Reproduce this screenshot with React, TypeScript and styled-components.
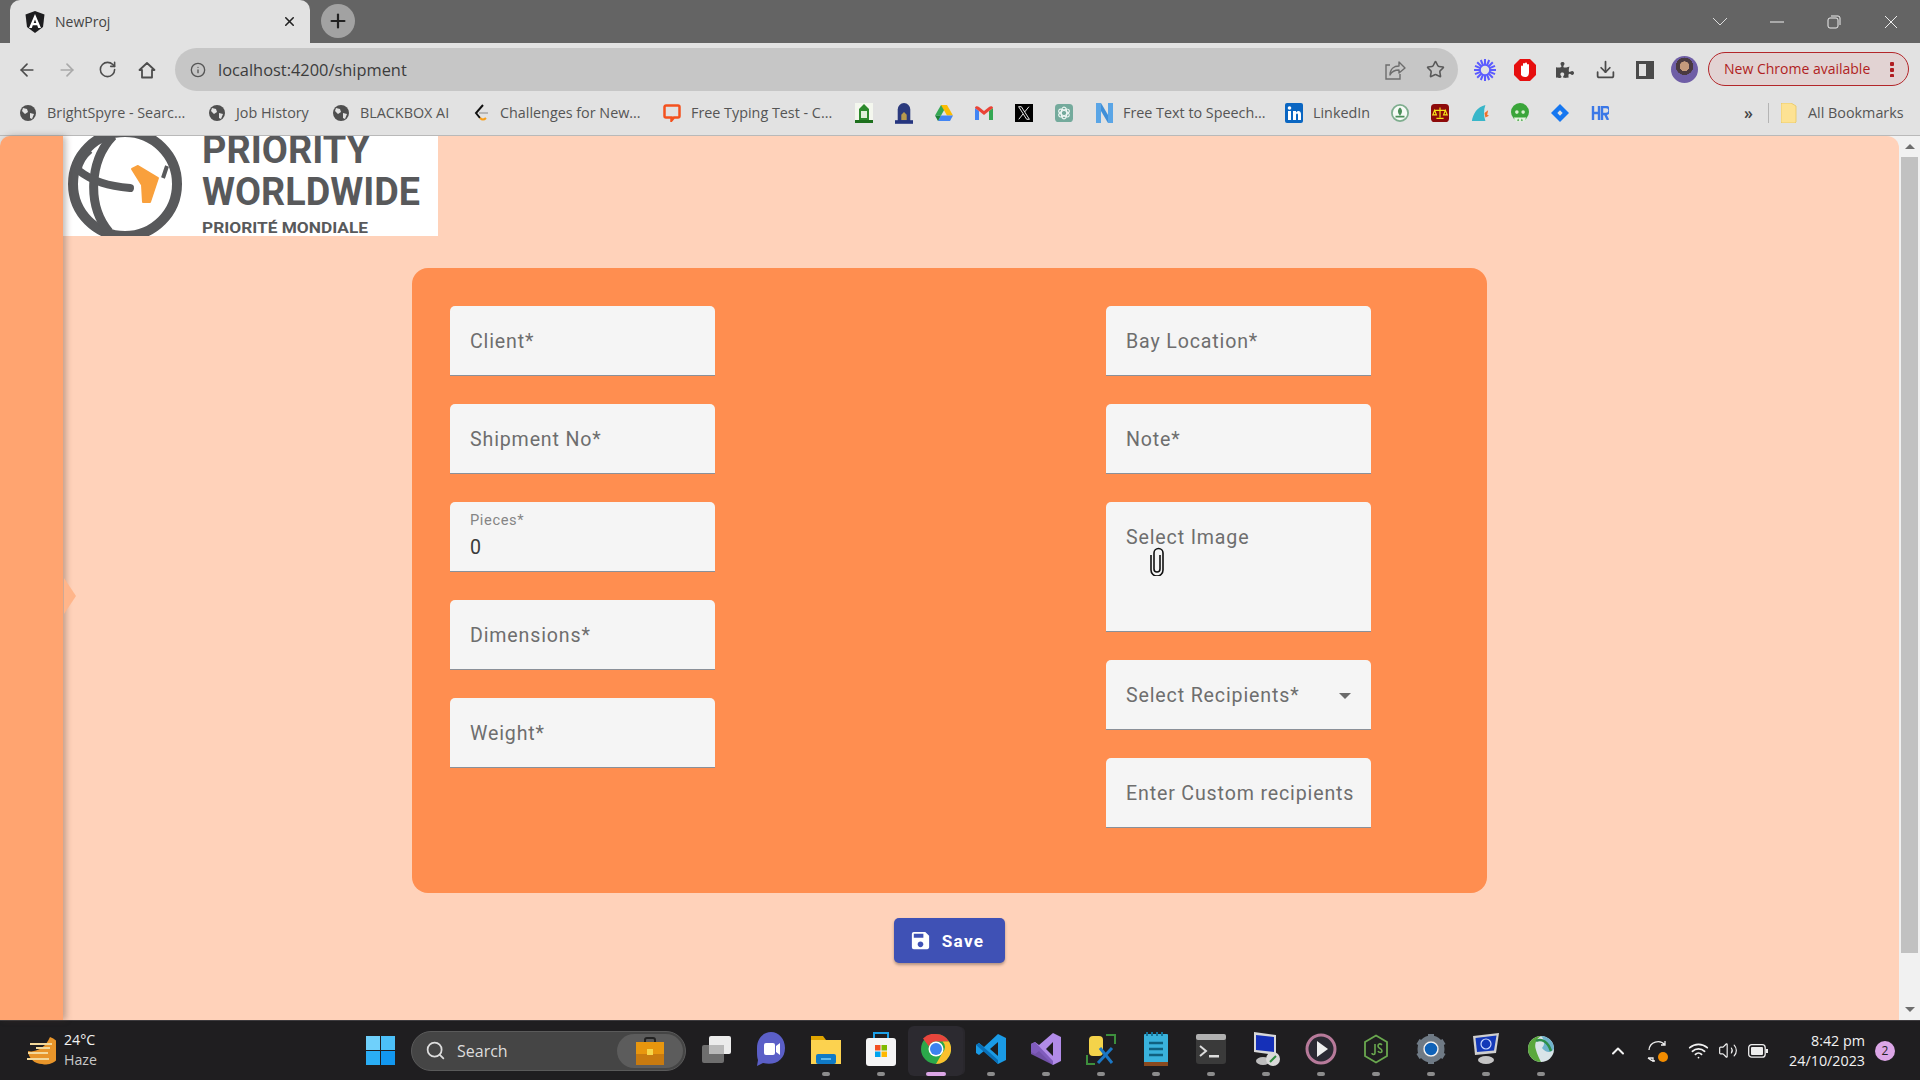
import React from "react";
import styled, { createGlobalStyle } from "styled-components";
import { ArrowLeft, ArrowRight, RotateCw, Info, Star, Download, Search, ChevronUp, Wifi, Volume2, X, Plus } from "lucide-react";
import { FaPuzzlePiece } from "react-icons/fa";
import { MdSave } from "react-icons/md";

const GlobalStyle = createGlobalStyle`
  html, body {
    margin: 0;
    padding: 0;
    height: 100%;
    overflow: hidden;
  }
  * {
    box-sizing: border-box;
  }
`;

const Screen = styled.div`
  width: 1920px;
  height: 1080px;
  display: flex;
  flex-direction: column;
  font-family: "Open Sans", "Liberation Sans", sans-serif;
`;

// Browser chrome
const TitleBar = styled.div`
  height: 43px;
  background: #646464;
  display: flex;
  align-items: flex-end;
  padding-left: 10px;
`;

const Tab = styled.div`
  width: 300px;
  height: 43px;
  background: #e2e2e2;
  border-radius: 10px 10px 0 0;
  display: flex;
  align-items: center;
  padding: 0 13px 0 15px;
  gap: 10px;
`;

const TabTitle = styled.span`
  flex: 1;
  font-size: 14px;
  color: #444;
`;

const NewTab = styled.div`
  width: 34px;
  height: 34px;
  margin: 0 0 5px 11px;
  border-radius: 50%;
  background: #a2a2a2;
  display: flex;
  align-items: center;
  justify-content: center;
  color: #222;
`;

const WindowControls = styled.div`
  margin-left: auto;
  height: 43px;
  display: flex;
  align-items: center;
  color: #f0f0f0;
  padding-right: 1px;
`;

const WindowButton = styled.div`
  width: 57px;
  display: flex;
  justify-content: center;
`;

const Toolbar = styled.div`
  height: 48px;
  background: #e2e2e2;
  display: flex;
  align-items: flex-end;
  padding: 0 0 0 7px;
`;

const NavButton = styled.div<{ $faded?: boolean }>`
  width: 40px;
  height: 43px;
  flex: none;
  display: flex;
  align-items: center;
  justify-content: center;
  color: ${(p) => (p.$faded ? "#a9a9a9" : "#4d4d4d")};
`;

const AddressBar = styled.div`
  width: 1283px;
  height: 43px;
  flex: none;
  margin-left: 8px;
  background: #c6c6c6;
  border-radius: 22px;
  display: flex;
  align-items: center;
  padding: 0 2px 0 15px;
  color: #555;
`;

const Url = styled.span`
  flex: 1;
  margin-left: 12px;
  font-size: 16.4px;
  color: #3c3c3c;
`;

const AddressAction = styled.div`
  width: 41px;
  display: flex;
  justify-content: center;
`;

const ExtensionRow = styled.div`
  height: 43px;
  flex: none;
  margin-left: 7px;
  display: flex;
  align-items: center;
`;

const Extension = styled.div`
  width: 40px;
  display: flex;
  justify-content: center;
  color: #4a4a4a;
`;

const Avatar = styled.div`
  width: 27px;
  height: 27px;
  margin-left: -1px;
  border-radius: 50%;
  background: radial-gradient(circle at 50% 38%, #c49a7c 0 22%, #4a3a40 23% 40%, #6f5ea6 41% 100%);
`;

const UpdatePill = styled.div`
  width: 201px;
  height: 34px;
  flex: none;
  margin: 0 0 5px 10px;
  border: 1px solid #b3262a;
  border-radius: 17px;
  background: #e2d3d3;
  color: #b01e22;
  display: flex;
  align-items: center;
  justify-content: space-between;
  padding: 0 14px 2px 15px;
  font-size: 14px;
  white-space: nowrap;
`;

const PillDots = styled.span`
  width: 4px;
  height: 16px;
  margin-top: 2px;
  background: radial-gradient(circle, #b01e22 2px, transparent 2.5px) 0 0 / 4px 6px repeat-y;
`;

const BookmarkBar = styled.div`
  height: 45px;
  background: #e2e2e2;
  border-bottom: 1px solid #b9b9b9;
  display: flex;
  align-items: center;
  gap: 22px;
  padding: 0 14px 0 19px;
`;

const Bookmark = styled.div`
  display: flex;
  align-items: center;
  gap: 10px;
  font-size: 14.35px;
  color: #555;
  white-space: nowrap;
`;

const BookmarkText = styled.span<{ $w: number }>`
  width: ${(p) => p.$w}px;
  padding-bottom: 2px;
`;

const BookmarkIcon = styled.div`
  width: 18px;
  height: 18px;
  flex: none;
  display: flex;
  align-items: center;
  justify-content: center;
`;

const BookmarkEnd = styled.div`
  margin-left: auto;
  display: flex;
  align-items: center;
  font-size: 14px;
  color: #555;
`;

const More = styled.span`
  font-size: 16px;
  color: #444;
  font-weight: 600;
`;

const Divider = styled.span`
  width: 1px;
  height: 20px;
  background: #b4b4b4;
  margin: 0 11px 0 15px;
`;

// Page
const PageArea = styled.div`
  flex: 1;
  min-height: 0;
  display: flex;
  background: #e2e2e2;
`;

const Sidebar = styled.aside`
  position: relative;
  width: 63px;
  background: #ffa470;
  border-top-left-radius: 10px;
  box-shadow: 3px 0 6px rgba(80, 60, 50, 0.35);
  z-index: 1;
`;

const SidebarToggle = styled.div`
  position: absolute;
  left: 64px;
  top: 442px;
  border-left: 12px solid #ffb58a;
  border-top: 18px solid transparent;
  border-bottom: 18px solid transparent;
`;

const PageBody = styled.div`
  flex: 1;
  min-width: 0;
  display: flex;
  background: #f1f1f1;
`;

const Main = styled.main`
  flex: 1;
  background: #ffd2ba;
  border-top-right-radius: 12px;
  overflow: hidden;
`;

const LogoBox = styled.div`
  width: 375px;
  height: 100px;
  background: #fff;
  overflow: hidden;
`;

const Content = styled.div`
  width: 1075px;
  margin: 32px 0 0 349px;
  display: flex;
  flex-direction: column;
  align-items: center;
`;

const FormCard = styled.form`
  width: 100%;
  background: #ff8e50;
  border-radius: 16px;
  display: grid;
  grid-template-columns: 265px 265px;
  column-gap: 391px;
  padding: 38px 0 65px 38px;
`;

const FieldColumn = styled.div`
  display: flex;
  flex-direction: column;
  gap: 28px;
`;

const Field = styled.div<{ $tall?: boolean }>`
  position: relative;
  height: ${(p) => (p.$tall ? 130 : 70)}px;
  background: #f5f5f5;
  border-radius: 5px 5px 0 0;
  border-bottom: 1px solid #8a9099;
  padding: ${(p) => (p.$tall ? "22px" : "0")} 20px 0;
  display: flex;
  flex-direction: column;
  justify-content: ${(p) => (p.$tall ? "flex-start" : "center")};
  font-family: Roboto, sans-serif;
`;

const FieldLabel = styled.div`
  font-size: 19.6px;
  line-height: 24px;
  padding-top: 2px;
  letter-spacing: 0.85px;
  color: #6e6e6e;
  white-space: nowrap;
`;

const FloatingLabel = styled.div`
  font-size: 14.7px;
  line-height: 18px;
  margin-top: -2px;
  letter-spacing: 0.6px;
  color: #858585;
`;

const FieldValue = styled.div`
  font-size: 19.6px;
  line-height: 24px;
  margin-top: 7px;
  color: #3a3a3a;
`;

const ClipIcon = styled.svg`
  width: 16px;
  height: 29px;
  margin: -3px 0 0 23px;
`;

const DropArrow = styled.span`
  position: absolute;
  right: 20px;
  top: 33px;
  border-top: 6px solid #6b6b6b;
  border-left: 6px solid transparent;
  border-right: 6px solid transparent;
`;

const SaveButton = styled.button`
  width: 111px;
  height: 45px;
  margin-top: 25px;
  border: none;
  border-radius: 5px;
  background: #3f51b5;
  color: #fff;
  display: flex;
  align-items: center;
  justify-content: center;
  gap: 10px;
  padding: 0 6px 0 0;
  font-family: Roboto, sans-serif;
  font-size: 17.2px;
  font-weight: 700;
  letter-spacing: 1.2px;
  box-shadow: 0 2px 3px rgba(0, 0, 0, 0.3);
`;

const ScrollTrack = styled.div`
  width: 21px;
  display: flex;
  flex-direction: column;
  align-items: center;
  justify-content: space-between;
`;

const ScrollArrow = styled.div<{ $down?: boolean }>`
  height: 21px;
  display: flex;
  align-items: center;
  &::before {
    content: "";
    border-left: 5px solid transparent;
    border-right: 5px solid transparent;
    ${(p) => (p.$down ? "border-top" : "border-bottom")}: 5px solid #6e6e6e;
  }
`;

const ScrollThumb = styled.div`
  width: 17px;
  flex: 1;
  margin: 0 0 46px;
  background: #c1c1c1;
`;

// Taskbar
const Taskbar = styled.div`
  height: 60px;
  background: #1f1e20;
  border-top: 1px solid #3d3b3e;
  display: flex;
  align-items: center;
  color: #f2f2f2;
  font-family: "Open Sans", sans-serif;
`;

const Weather = styled.div`
  width: 349px;
  padding-left: 24px;
  display: flex;
  align-items: center;
  gap: 8px;
`;

const WeatherText = styled.div`
  font-size: 14.2px;
  line-height: 20px;
  padding-bottom: 2px;
`;

const WeatherSub = styled.div`
  color: #c8c8c8;
`;

const StartButton = styled.div`
  width: 62px;
  display: flex;
  justify-content: center;
`;

const SearchBox = styled.div`
  width: 275px;
  height: 40px;
  border-radius: 20px;
  background: #454545;
  border: 1px solid #5a5a5a;
  display: flex;
  align-items: center;
  padding: 0 2px 0 13px;
  color: #ddd;
  font-size: 16px;
  gap: 11px;
`;

const SearchLabel = styled.span`
  flex: 1;
`;

const SearchBadge = styled.div`
  width: 66px;
  height: 34px;
  border-radius: 17px;
  background: #5c5c5c;
  display: flex;
  align-items: center;
  justify-content: center;
`;

const AppIcons = styled.div`
  display: flex;
  margin-left: 2px;
`;

const AppSlot = styled.div<{ $active?: boolean }>`
  position: relative;
  width: 55px;
  height: 50px;
  display: flex;
  align-items: center;
  justify-content: center;
  padding-bottom: 3px;
  ${(p) =>
    p.$active
      ? "background: #2c2a30; border-radius: 6px; box-shadow: 3px 0 0 -1px #29272c;"
      : ""}
`;

const RunDot = styled.span<{ $active?: boolean }>`
  position: absolute;
  bottom: 0;
  left: 50%;
  transform: translateX(-50%);
  width: ${(p) => (p.$active ? 20 : 8)}px;
  height: 4px;
  border-radius: 2px;
  background: ${(p) => (p.$active ? "#dba6e6" : "#8c8c8c")};
`;

const Tray = styled.div`
  margin-left: auto;
  display: flex;
  align-items: center;
  padding-right: 25px;
`;

const TrayIcon = styled.div<{ $w: number }>`
  width: ${(p) => p.$w}px;
  display: flex;
  justify-content: center;
`;

const Clock = styled.div`
  width: 87px;
  text-align: right;
  font-size: 14.3px;
  line-height: 20px;
  margin: 0 10px 0 0;
`;

const Badge = styled.div`
  width: 20px;
  height: 20px;
  border-radius: 50%;
  background: #dba6e6;
  color: #222;
  font-size: 12px;
  display: flex;
  align-items: center;
  justify-content: center;
`;

const GlobeIcon = () => (
  <svg width="16" height="16" viewBox="0 0 16 16">
    <circle cx="8" cy="8" r="8" fill="#4f4f4f" />
    <path d="M3 3l4 1 1 3-3 2-3-3zM10 8l4 1-2 5-2-1z" fill="#e2e2e2" />
  </svg>
);

const Favicons: Record<string, React.ReactNode> = {
  leet: (
    <svg width="16" height="18" viewBox="0 0 16 18" fill="none" strokeWidth="2">
      <path d="M10 1 3 9l4 5" stroke="#111" />
      <path d="M6 9h9" stroke="#b5b5b5" />
      <path d="M7 14c2 2 4 2 6 0" stroke="#f89f1b" />
    </svg>
  ),
  chat: (
    <svg width="18" height="18" viewBox="0 0 18 18" fill="none">
      <path d="M3 1.5h12a1.5 1.5 0 0 1 1.5 1.5v9a1.5 1.5 0 0 1-1.5 1.5h-4L8.5 16.5V13.500H3A1.500 1.500 0 0 1 1.500 12V3A1.500 1.500 0 0 1 3 1.500z" stroke="#f4511e" strokeWidth="2.5" />
    </svg>
  ),
  green: (
    <svg width="18" height="20" viewBox="0 0 18 20">
      <rect x="0" width="18" height="20" fill="#f4f7ee" />
      <path d="M4 18V6l5-5 5 5v12z" fill="#2c8a2c" />
      <rect x="6" y="8" width="6" height="7" fill="#dff0d8" />
      <rect y="17" width="18" height="3" fill="#1d6f1d" />
    </svg>
  ),
  blue: (
    <svg width="20" height="24" viewBox="0 0 20 24">
      <path d="M3 22V8a7 7 0 0 1 14 0v14z" fill="#2b3a7d" />
      <path d="M7 20v-6l3-3 3 3v6z" fill="#b99a4d" />
      <rect y="20" width="20" height="4" fill="#25357f" />
    </svg>
  ),
  drive: (
    <svg width="18" height="16" viewBox="0 0 18 16">
      <path d="M6 0h6L6 10.500H0z" fill="#34a853" />
      <path d="M6 0h6l6 10.500h-6z" fill="#fbbc04" />
      <path d="M3 16 6 10.500h12L15 16z" fill="#4285f4" />
      <path d="M0 10.500 3 16l3-5.500z" fill="#188038" />
    </svg>
  ),
  gmail: (
    <svg width="18" height="14" viewBox="0 0 18 14">
      <path d="M0 2v12h4V5z" fill="#4285f4" />
      <path d="M14 5v9h4V2z" fill="#34a853" />
      <path d="M0 2c0-2 2.500-2.500 4-1l5 4 5-4c1.500-1.500 4-1 4 1l-4 3-5 4-5-4z" fill="#ea4335" />
    </svg>
  ),
  x: (
    <svg width="20" height="20" viewBox="0 0 20 20">
      <rect width="20" height="20" fill="#000" />
      <path d="M4 3h3l9 14h-3z" fill="none" stroke="#fff" strokeWidth="1" />
      <path d="M15.500 3 10.800 8.800M9 11l-4.800 6" stroke="#fff" strokeWidth="1" />
    </svg>
  ),
  gpt: (
    <svg width="20" height="20" viewBox="0 0 20 20">
      <rect width="20" height="20" rx="4" fill="#74aa9c" />
      <g fill="none" stroke="#eef6f3" strokeWidth="1.300">
        <ellipse cx="10" cy="10" rx="3" ry="6.500" />
        <ellipse cx="10" cy="10" rx="3" ry="6.500" transform="rotate(60 10 10)" />
        <ellipse cx="10" cy="10" rx="3" ry="6.500" transform="rotate(120 10 10)" />
      </g>
    </svg>
  ),
  notevibes: (
    <svg width="17" height="20" viewBox="0 0 17 20">
      <path d="M0 0h5v20H0zM12 0h5v20h-5z" fill="#5aa5e6" />
      <path d="M5 0l7 12v8L5 8z" fill="#3f8fd8" />
    </svg>
  ),
  linkedin: (
    <svg width="18" height="20" viewBox="0 0 18 20">
      <rect width="18" height="20" rx="2" fill="#0a66c2" />
      <rect x="3" y="8" width="3" height="9" fill="#fff" />
      <circle cx="4.500" cy="5" r="1.800" fill="#fff" />
      <path d="M8 8h3v1.500c1.500-2.500 5-2 5 1.500v6h-3v-5c0-2-2-2-2 0v5H8z" fill="#fff" />
    </svg>
  ),
  emblem: (
    <svg width="20" height="20" viewBox="0 0 20 20">
      <circle cx="10" cy="10" r="9" fill="#f6faf6" stroke="#7fae8f" strokeWidth="2" />
      <path d="M10 4c3 2 3 6 0 9-3-3-3-7 0-9zM5 13h10v2H5z" fill="#4c8f5a" />
    </svg>
  ),
  law: (
    <svg width="20" height="20" viewBox="0 0 20 20">
      <rect width="20" height="20" rx="4" fill="#8d0a0a" />
      <path d="M10 4v11M6 16h8M4 7h12M4 7l-2 5h4zM16 7l-2 5h4z" stroke="#f6e419" strokeWidth="1.300" fill="none" />
    </svg>
  ),
  fin: (
    <svg width="20" height="18" viewBox="0 0 20 18">
      <path d="M1 18C2 10 7 2 16 0c-2 5-2 12 0 18z" fill="#38b6c9" />
      <path d="M15 9l4-3-1 5 2 1-4 2z" fill="#f0702a" />
    </svg>
  ),
  ghost: (
    <svg width="20" height="22" viewBox="0 0 20 22">
      <circle cx="10" cy="10" r="10" fill="#3aa53a" />
      <path d="M3 16l3 5 2-4 2 5 2-5 2 4 3-5z" fill="#e4f3e0" />
      <circle cx="6.500" cy="10" r="2" fill="#d8f0d0" />
      <circle cx="13.500" cy="10" r="2" fill="#d8f0d0" />
    </svg>
  ),
  jira: (
    <svg width="20" height="20" viewBox="0 0 20 20">
      <path d="M10 0l10 10-10 10L0 10z" fill="#1677f0" />
      <path d="M10 7l3 3-3 3-3-3z" fill="#e2e2e2" />
    </svg>
  ),
};

const LogoMark = () => (
  <svg width="375" height="100" viewBox="0 0 375 100">
    <g fill="none" stroke="#58595b">
      <circle cx="62" cy="48" r="52" strokeWidth="10" />
      <path d="M50 0C26 25 24 70 46 96" strokeWidth="9" />
      <path d="M15 34C30 46 46 50 67 52" strokeWidth="8" strokeLinecap="round" />
      <path d="M27 14C20 20 16 28 15 34" strokeWidth="7" />
      <path d="M104 30 100 42" strokeWidth="4" />
    </g>
    <path d="M69 33 75 30 95 42 87 66 80 66 79 49Z" fill="#f9a03c" stroke="#f9a03c" strokeLinejoin="round" strokeWidth="2" />
    <g fill="#58595b" fontFamily="Roboto, sans-serif" fontWeight="700">
      <text x="139" y="27" fontSize="38" textLength="168" lengthAdjust="spacingAndGlyphs">PRIORITY</text>
      <text x="139" y="69" fontSize="38" textLength="218" lengthAdjust="spacingAndGlyphs">WORLDWIDE</text>
      <text x="139" y="97" fontSize="15.500" textLength="166" lengthAdjust="spacingAndGlyphs">PRIORITÉ MONDIALE</text>
    </g>
  </svg>
);

const TaskIcons: { id: string; node: React.ReactNode; active?: boolean; dot?: boolean }[] = [
  {
    id: "desktops",
    node: (
      <svg width="30" height="30" viewBox="0 0 30 30">
        <rect x="1" y="11" width="22" height="18" rx="2" fill="#6e6e6e" />
        <rect x="8" y="2" width="22" height="18" rx="2" fill="#ececec" />
        <rect x="8" y="11" width="15" height="9" fill="#b9b9b9" />
      </svg>
    ),
  },
  {
    id: "teams",
    node: (
      <svg width="30" height="36" viewBox="0 0 30 36">
        <path d="M15 1C7 1 1 8 1 17c0 6 0 9 1 12l-1 6 6-3c12 3 22-3 22-15C29 8 23 1 15 1z" fill="#5b5fc7" />
        <rect x="8" y="12" width="11" height="12" rx="2" fill="#fff" />
        <path d="M20 15l4-3v12l-4-3z" fill="#fff" />
      </svg>
    ),
  },
  {
    id: "files",
    dot: true,
    node: (
      <svg width="30" height="30" viewBox="0 0 30 30">
        <path d="M0 2h12l3 4h15v24H0z" fill="#e0a500" />
        <rect y="6" width="30" height="24" fill="#fcd24f" />
        <rect x="5" y="20" width="20" height="10" rx="2" fill="#0f7ac6" />
        <rect x="10" y="24" width="10" height="2" fill="#5cb8ef" />
      </svg>
    ),
  },
  {
    id: "store",
    dot: true,
    node: (
      <svg width="30" height="34" viewBox="0 0 30 34">
        <path d="M8 7V1h14v6" fill="none" stroke="#1da1e8" strokeWidth="2" />
        <rect y="6" width="30" height="28" rx="3" fill="#f5f5f5" />
        <rect x="9" y="13" width="5.500" height="5.500" fill="#f25022" />
        <rect x="15.500" y="13" width="5.500" height="5.500" fill="#7fba00" />
        <rect x="9" y="19.500" width="5.500" height="5.500" fill="#00a4ef" />
        <rect x="15.500" y="19.500" width="5.500" height="5.500" fill="#ffb900" />
      </svg>
    ),
  },
  {
    id: "chrome",
    active: true,
    dot: true,
    node: (
      <svg width="30" height="30" viewBox="0 0 30 30">
        <circle cx="15" cy="15" r="15" fill="#2ba84a" />
        <path d="M15 0a15 15 0 0 1 13 7.500H15a7.500 7.500 0 0 0-7 5L2 4.500A15 15 0 0 1 15 0z" fill="#e8453c" />
        <path d="M28 7.500A15 15 0 0 1 15 30l6.500-11.300a7.500 7.500 0 0 0 0-11.200z" fill="#fbc02d" />
        <circle cx="15" cy="15" r="7.500" fill="#fff" />
        <circle cx="15" cy="15" r="6" fill="#3b82f0" />
      </svg>
    ),
  },
  {
    id: "vscode",
    dot: true,
    node: (
      <svg width="30" height="30" viewBox="0 0 30 30">
        <path d="M22 0l8 4v22l-8 4-14-13-5 4-3-2v-8l3-2 5 4z" fill="#1a9be6" />
        <path d="M22 8l-8 7 8 7z" fill="#1f1e20" />
        <path d="M3 9l19 17v4L0 11z" fill="#0a70b8" />
      </svg>
    ),
  },
  {
    id: "vstudio",
    dot: true,
    node: (
      <svg width="30" height="32" viewBox="0 0 30 32">
        <path d="M22 0l8 4v24l-8 4-14-14-4 3-4-2V11l4-2 4 3z" fill="#b18be8" />
        <path d="M22 9l-7 7 7 7z" fill="#1f1e20" />
        <path d="M0 11l4-2 18 19v4L0 21z" fill="#7b57b8" opacity="0.9" />
      </svg>
    ),
  },
  {
    id: "dbtool",
    dot: true,
    node: (
      <svg width="30" height="32" viewBox="0 0 30 32">
        <path d="M20 2h9v9M1 22v9h8" fill="none" stroke="#3d8f3d" strokeWidth="2" />
        <rect x="3" y="3" width="14" height="20" rx="4" fill="#f4d34a" />
        <path d="M12 30 26 15M14 15l12 15" stroke="#1b77c4" strokeWidth="3" />
      </svg>
    ),
  },
  {
    id: "notepad",
    dot: true,
    node: (
      <svg width="24" height="34" viewBox="0 0 24 34">
        <rect y="2" width="24" height="32" rx="1" fill="#39b2dc" />
        <rect y="30" width="24" height="4" fill="#8a4a1f" />
        <path d="M5 11h14M5 17h14M5 23h14" stroke="#10607f" strokeWidth="2.500" />
        <path d="M3 0v4M8 0v4M13 0v4M18 0v4" stroke="#14749a" strokeWidth="2" />
      </svg>
    ),
  },
  {
    id: "terminal",
    dot: true,
    node: (
      <svg width="30" height="30" viewBox="0 0 30 30">
        <rect width="30" height="30" rx="3" fill="#3a3a3a" />
        <rect width="30" height="6" rx="2" fill="#b0b0b0" />
        <path d="M4 12l6 5-6 5" fill="none" stroke="#ddd" strokeWidth="2" />
        <rect x="13" y="21" width="10" height="2.500" fill="#ddd" />
      </svg>
    ),
  },
  {
    id: "remote",
    dot: true,
    node: (
      <svg width="30" height="34" viewBox="0 0 30 34">
        <path d="M3 0l22 3v20L3 20z" fill="#d8d8d8" />
        <path d="M5 3l18 2v15L5 18z" fill="#1530b8" />
        <ellipse cx="12" cy="29" rx="7" ry="4" fill="#bdbdbd" />
        <circle cx="22" cy="27" r="7" fill="#d9d9d9" />
        <path d="M19 30l6-6" stroke="#2e8b3d" strokeWidth="2" />
      </svg>
    ),
  },
  {
    id: "player",
    dot: true,
    node: (
      <svg width="32" height="32" viewBox="0 0 32 32">
        <circle cx="16" cy="16" r="14" fill="#2b2a33" stroke="#b77a9a" strokeWidth="3" />
        <path d="M12 8l11 8-11 8z" fill="#eee" />
      </svg>
    ),
  },
  {
    id: "node",
    dot: true,
    node: (
      <svg width="26" height="30" viewBox="0 0 26 30">
        <path d="M13 1.500l11 6.500v14l-11 6.500L2 22V8z" fill="none" stroke="#6aa84f" strokeWidth="1.800" />
        <path d="M12 10v9c0 2-3 2-3 0M19 11c-2-2-4-1-4 1 0 3 4 2 4 5 0 2-3 2-4 0" fill="none" stroke="#6aa84f" strokeWidth="1.600" />
      </svg>
    ),
  },
  {
    id: "settings",
    dot: true,
    node: (
      <svg width="30" height="30" viewBox="0 0 30 30">
        <circle cx="15" cy="15" r="10.500" fill="none" stroke="#6f7a85" strokeWidth="6" />
        <path d="M15 0v6M15 24v6M2 7.500l5 3M23 19.500l5 3M28 7.500l-5 3M7 19.500l-5 3" stroke="#6f7a85" strokeWidth="6" />
        <circle cx="15" cy="15" r="7" fill="#0f62b8" stroke="#f2f2f2" strokeWidth="1.500" />
      </svg>
    ),
  },
  {
    id: "sysinfo",
    dot: true,
    node: (
      <svg width="28" height="32" viewBox="0 0 28 32">
        <path d="M1 3l26-3-3 20L3 22z" fill="#cfcfcf" />
        <path d="M3.500 5l21-2.500-2.500 15L5 19z" fill="#1338b8" />
        <circle cx="14" cy="11" r="5" fill="none" stroke="#c8d6ff" strokeWidth="1.200" />
        <ellipse cx="14" cy="27" rx="8" ry="4" fill="#c4c4c4" />
      </svg>
    ),
  },
  {
    id: "anyconnect",
    dot: true,
    node: (
      <svg width="28" height="28" viewBox="0 0 28 28">
        <circle cx="14" cy="14" r="13" fill="#d8e4e8" />
        <path d="M1 14A13 13 0 0 1 14 1c-5 3-7 8-5 14 1 4 3 8 5 12A13 13 0 0 1 1 14z" fill="#5aa83c" />
        <path d="M14 1a13 13 0 0 1 13 13c-3 4-8 4-12-1 3-3 3-8-1-12z" fill="#6fb3cc" />
        <path d="M9 6c6-3 12 1 15 10" fill="none" stroke="#2d8f4a" strokeWidth="2.500" />
      </svg>
    ),
  },
];

const fieldsLeft = ["Client*", "Shipment No*"];
const fieldsLeftEnd = ["Dimensions*", "Weight*"];

const App: React.FC = () => {
  return (
    <Screen>
      <GlobalStyle />
      <TitleBar>
        <Tab>
          <svg width="20" height="22" viewBox="0 0 20 22">
            <path d="M10 0 19.500 3.500 18 16l-8 6-8-6L.5 3.500z" fill="#1d1d1f" />
            <path d="M10 3 4 17h2.800l1-2.700h4.400l1 2.700H16zM8.700 12 10 8.600l1.300 3.400z" fill="#fff" />
          </svg>
          <TabTitle>NewProj</TabTitle>
          <X size={15} color="#222" strokeWidth={2.5} />
        </Tab>
        <NewTab>
          <Plus size={22} strokeWidth={2.4} />
        </NewTab>
        <WindowControls>
          <WindowButton>
            <svg width="16" height="9" viewBox="0 0 16 9" fill="none" stroke="#ddd">
              <path d="M1 1l7 7 7-7" />
            </svg>
          </WindowButton>
          <WindowButton>
            <svg width="14" height="14" viewBox="0 0 14 14" stroke="#eee">
              <path d="M0 7h14" />
            </svg>
          </WindowButton>
          <WindowButton>
            <svg width="14" height="14" viewBox="0 0 14 14" fill="none" stroke="#eee">
              <rect x="1" y="3" width="10" height="10" rx="2" />
              <path d="M4 1h7a2 2 0 0 1 2 2v7" />
            </svg>
          </WindowButton>
          <WindowButton>
            <svg width="14" height="14" viewBox="0 0 14 14" stroke="#eee">
              <path d="M1 1l12 12M13 1 1 13" />
            </svg>
          </WindowButton>
        </WindowControls>
      </TitleBar>

      <Toolbar>
        <NavButton><ArrowLeft size={20} /></NavButton>
        <NavButton $faded><ArrowRight size={20} /></NavButton>
        <NavButton><RotateCw size={19} /></NavButton>
        <NavButton>
          <svg width="18" height="18" viewBox="0 0 18 18" fill="none" stroke="currentColor" strokeWidth="1.800">
            <path d="M1.500 9 9 2l7.500 7H14v7.500H4V9z" strokeLinejoin="round" />
          </svg>
        </NavButton>
        <AddressBar>
          <Info size={16} />
          <Url>localhost:4200/shipment</Url>
          <AddressAction>
            <svg width="22" height="20" viewBox="0 0 22 20" fill="none" stroke="#6d6d6d" strokeWidth="1.400">
              <path d="M6 5H2v14h14v-5" />
              <path d="M6 15c0-6 4-9 9-9V2l6 6-6 5V10c-4 0-7 1-9 5z" strokeLinejoin="round" />
            </svg>
          </AddressAction>
          <AddressAction><Star size={19} color="#5a5a5a" /></AddressAction>
        </AddressBar>
        <ExtensionRow>
          <Extension>
            <svg width="22" height="22" viewBox="0 0 22 22" stroke="#5b5bff" strokeWidth="2">
              <path d="M11 0v22M0 11h22M3.200 3.200l15.600 15.600M18.800 3.200 3.200 18.800M6.800 1l8.400 20M15.200 1 6.800 21M1 6.800l20 8.400M21 6.800 1 15.200" />
              <circle cx="11" cy="11" r="5" fill="#e2e2e2" stroke="#5b5bff" strokeWidth="1.600" />
            </svg>
          </Extension>
          <Extension>
            <svg width="24" height="24" viewBox="0 0 24 24">
              <path d="M7 1h10l6 6v10l-6 6H7l-6-6V7z" fill="#e60f0f" />
              <path d="M8 17V8.500a1 1 0 0 1 2 0V6a1 1 0 0 1 2 0v-.5a1 1 0 0 1 2 0V7a1 1 0 0 1 2 0v7c0 3-1 5-4 5-2 0-3-1-4-2z" fill="#fff" />
            </svg>
          </Extension>
          <Extension><FaPuzzlePiece size={18} /></Extension>
          <Extension><Download size={21} /></Extension>
          <Extension>
            <svg width="18" height="18" viewBox="0 0 18 18" fill="none">
              <rect x="1.500" y="1.500" width="15" height="15" stroke="#4a4a4a" strokeWidth="3" />
              <rect x="10" y="1.500" width="6" height="15" fill="#4a4a4a" />
            </svg>
          </Extension>
        </ExtensionRow>
        <ExtensionRow>
          <Avatar />
        </ExtensionRow>
        <UpdatePill>
          New Chrome available
          <PillDots />
        </UpdatePill>
      </Toolbar>

      <BookmarkBar>
        <Bookmark><BookmarkIcon><GlobeIcon /></BookmarkIcon><BookmarkText $w={139}>BrightSpyre - Searc...</BookmarkText></Bookmark>
        <Bookmark><BookmarkIcon><GlobeIcon /></BookmarkIcon><BookmarkText $w={74}>Job History</BookmarkText></Bookmark>
        <Bookmark><BookmarkIcon><GlobeIcon /></BookmarkIcon><BookmarkText $w={90}>BLACKBOX AI</BookmarkText></Bookmark>
        <Bookmark><BookmarkIcon>{Favicons.leet}</BookmarkIcon><BookmarkText $w={141}>Challenges for New...</BookmarkText></Bookmark>
        <Bookmark><BookmarkIcon>{Favicons.chat}</BookmarkIcon><BookmarkText $w={142}>Free Typing Test - C...</BookmarkText></Bookmark>
        <BookmarkIcon>{Favicons.green}</BookmarkIcon>
        <BookmarkIcon>{Favicons.blue}</BookmarkIcon>
        <BookmarkIcon>{Favicons.drive}</BookmarkIcon>
        <BookmarkIcon>{Favicons.gmail}</BookmarkIcon>
        <BookmarkIcon>{Favicons.x}</BookmarkIcon>
        <BookmarkIcon>{Favicons.gpt}</BookmarkIcon>
        <Bookmark><BookmarkIcon>{Favicons.notevibes}</BookmarkIcon><BookmarkText $w={140}>Free Text to Speech...</BookmarkText></Bookmark>
        <Bookmark><BookmarkIcon>{Favicons.linkedin}</BookmarkIcon><BookmarkText $w={56}>LinkedIn</BookmarkText></Bookmark>
        <BookmarkIcon>{Favicons.emblem}</BookmarkIcon>
        <BookmarkIcon>{Favicons.law}</BookmarkIcon>
        <BookmarkIcon>{Favicons.fin}</BookmarkIcon>
        <BookmarkIcon>{Favicons.ghost}</BookmarkIcon>
        <BookmarkIcon>{Favicons.jira}</BookmarkIcon>
        <Bookmark>
          <svg width="18" height="14" viewBox="0 0 18 14" fill="none" stroke="#3b78e7" strokeWidth="2.400">
            <path d="M2 0v14M8 0v14M2 7h6M11 14V1h4a3 3 0 0 1 0 7h-4M14 8l3 6" />
          </svg>
        </Bookmark>
        <BookmarkEnd>
          <More>»</More>
          <Divider />
          <Bookmark>
            <BookmarkIcon>
              <svg width="16" height="20" viewBox="0 0 16 20">
                <path d="M1 0h9l5 3v16l-1 1H1l-1-1V1z" fill="#fde293" stroke="#e8c860" strokeWidth="0.800" />
              </svg>
            </BookmarkIcon>
            <BookmarkText $w={98}>All Bookmarks</BookmarkText>
          </Bookmark>
        </BookmarkEnd>
      </BookmarkBar>

      <PageArea>
        <Sidebar>
          <SidebarToggle />
        </Sidebar>
        <PageBody>
          <Main>
            <LogoBox>
              <LogoMark />
            </LogoBox>
            <Content>
              <FormCard>
                <FieldColumn>
                  {fieldsLeft.map((label) => (
                    <Field key={label}><FieldLabel>{label}</FieldLabel></Field>
                  ))}
                  <Field>
                    <FloatingLabel>Pieces*</FloatingLabel>
                    <FieldValue>0</FieldValue>
                  </Field>
                  {fieldsLeftEnd.map((label) => (
                    <Field key={label}><FieldLabel>{label}</FieldLabel></Field>
                  ))}
                </FieldColumn>
                <FieldColumn>
                  <Field><FieldLabel>Bay Location*</FieldLabel></Field>
                  <Field><FieldLabel>Note*</FieldLabel></Field>
                  <Field $tall>
                    <FieldLabel>Select Image</FieldLabel>
                    <ClipIcon viewBox="0 0 16 29" fill="none" stroke="#111" strokeWidth="1.600">
                      <path d="M11 8v14a3 3 0 0 1-6 0V6a4.500 4.500 0 0 1 9 0v17a6 6 0 0 1-12 0V8" />
                    </ClipIcon>
                  </Field>
                  <Field>
                    <FieldLabel>Select Recipients*</FieldLabel>
                    <DropArrow />
                  </Field>
                  <Field><FieldLabel>Enter Custom recipients</FieldLabel></Field>
                </FieldColumn>
              </FormCard>
              <SaveButton type="button">
                <MdSave size={23} />
                Save
              </SaveButton>
            </Content>
          </Main>
          <ScrollTrack>
            <ScrollArrow />
            <ScrollThumb />
            <ScrollArrow $down />
          </ScrollTrack>
        </PageBody>
      </PageArea>

      <Taskbar>
        <Weather>
          <svg width="32" height="32" viewBox="0 0 32 32">
            <path d="M26 2a14 14 0 0 1-8 27A14 14 0 0 1 4 16c8 2 18-4 22-14z" fill="#e8952a" />
            <path d="M6 9h22M12 13h14M4 18h20M3 24h22" stroke="#f3d89a" strokeWidth="2.200" />
          </svg>
          <WeatherText>
            24°C
            <WeatherSub>Haze</WeatherSub>
          </WeatherText>
        </Weather>
        <StartButton>
          <svg width="29" height="29" viewBox="0 0 29 29">
            <rect width="14" height="14" fill="#6fd0fb" />
            <rect x="15" width="14" height="14" fill="#4cc0f8" />
            <rect y="15" width="14" height="14" fill="#2aaef5" />
            <rect x="15" y="15" width="14" height="14" fill="#1297ef" />
          </svg>
        </StartButton>
        <SearchBox>
          <Search size={21} />
          <SearchLabel>Search</SearchLabel>
          <SearchBadge>
            <svg width="28" height="28" viewBox="0 0 28 28">
              <rect x="9" y="1" width="10" height="6" rx="2" fill="none" stroke="#222" strokeWidth="2" />
              <rect y="5" width="28" height="23" fill="#c87a10" />
              <rect y="5" width="28" height="12" fill="#e8960e" />
              <rect x="11" y="12" width="6" height="6" fill="#f6d54a" />
            </svg>
          </SearchBadge>
        </SearchBox>
        <AppIcons>
          {TaskIcons.map((app) => (
            <AppSlot key={app.id} $active={app.active}>
              {app.node}
              {app.dot && <RunDot $active={app.active} />}
            </AppSlot>
          ))}
        </AppIcons>
        <Tray>
          <TrayIcon $w={40}><ChevronUp size={20} strokeWidth={2.4} /></TrayIcon>
          <TrayIcon $w={40}>
            <svg width="22" height="24" viewBox="0 0 22 24" fill="none" stroke="#eee" strokeWidth="1.300">
              <path d="M2 11A9 9 0 0 1 18 6M18 2v4h-4M1 19h5v4M1 19c2 2 4 3 7 3" />
              <circle cx="16" cy="18" r="5" fill="#f28c00" stroke="none" />
            </svg>
          </TrayIcon>
          <TrayIcon $w={40}><Wifi size={21} /></TrayIcon>
          <TrayIcon $w={20}><Volume2 size={21} strokeWidth={1.4} /></TrayIcon>
          <TrayIcon $w={40}>
            <svg width="20" height="14" viewBox="0 0 20 14">
              <rect x="0.700" y="0.700" width="16.500" height="12.500" rx="3" fill="none" stroke="#eee" strokeWidth="1.300" />
              <rect x="3" y="3" width="12" height="8" rx="1" fill="#eee" />
              <rect x="18" y="5" width="2" height="4" fill="#eee" />
            </svg>
          </TrayIcon>
          <Clock>
            8:42 pm
            <br />
            24/10/2023
          </Clock>
          <Badge>2</Badge>
        </Tray>
      </Taskbar>
    </Screen>
  );
};

export default App;
